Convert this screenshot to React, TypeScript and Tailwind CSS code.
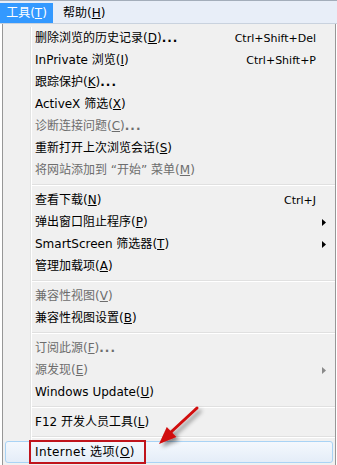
import React from "react";

type Item =
  | { t: "sep" }
  | {
      t: "item";
      label: string;
      k: string;
      suffix?: string;
      shortcut?: string;
      arrow?: boolean;
      disabled?: boolean;
    };

const items: Item[] = [
  { t: "item", label: "删除浏览的历史记录", k: "D", suffix: "...", shortcut: "Ctrl+Shift+Del" },
  { t: "item", label: "InPrivate 浏览", k: "I", shortcut: "Ctrl+Shift+P" },
  { t: "item", label: "跟踪保护", k: "K", suffix: "..." },
  { t: "item", label: "ActiveX 筛选", k: "X" },
  { t: "item", label: "诊断连接问题", k: "C", suffix: "...", disabled: true },
  { t: "item", label: "重新打开上次浏览会话", k: "S" },
  { t: "item", label: "将网站添加到 “开始” 菜单", k: "M", disabled: true },
  { t: "sep" },
  { t: "item", label: "查看下载", k: "N", shortcut: "Ctrl+J" },
  { t: "item", label: "弹出窗口阻止程序", k: "P", arrow: true },
  { t: "item", label: "SmartScreen 筛选器", k: "T", arrow: true },
  { t: "item", label: "管理加载项", k: "A" },
  { t: "sep" },
  { t: "item", label: "兼容性视图", k: "V", disabled: true },
  { t: "item", label: "兼容性视图设置", k: "B" },
  { t: "sep" },
  { t: "item", label: "订阅此源", k: "F", suffix: "...", disabled: true },
  { t: "item", label: "源发现", k: "E", arrow: true, disabled: true },
  { t: "item", label: "Windows Update", k: "U" },
  { t: "sep" },
  { t: "item", label: "F12 开发人员工具", k: "L" },
  { t: "sep" },
];

const Gutter = () => (
  <>
    <div className="w-[28px] shrink-0 border-r border-[#e2e3e3]" />
    <div className="w-px shrink-0 bg-white" />
  </>
);

const Label = ({ label, k, suffix }: { label: string; k: string; suffix?: string }) => (
  <span className="whitespace-nowrap text-[12px]">
    {label}(<span className="underline underline-offset-1">{k}</span>)
    {suffix ? <span className="tracking-[1px] font-bold">{suffix}</span> : null}
  </span>
);

export default function App() {
  return (
    <div
      className="relative h-[465px] w-[337px] overflow-hidden bg-white text-[11px] leading-none text-black"
      style={{ fontFamily: '"DejaVu Sans", "Noto Sans CJK SC", sans-serif' }}
    >
      {/* menu bar */}
      <div className="flex h-[24px] items-end border-t border-b border-t-[#a3adba] border-b-[#c9d2de] bg-[#e8eef8]">
        <div className="flex h-[20px] w-[53px] items-center justify-center bg-[#3399ff] text-white">
          <Label label="工具" k="T" />
        </div>
        <div className="flex h-[20px] items-center pl-[10px]">
          <Label label="帮助" k="H" />
        </div>
      </div>

      {/* dropdown */}
      <div className="ml-[2px] w-[334px] border-l border-r border-[#979797] bg-[#f0f0f0] pt-[3px]">
        {items.map((it, i) =>
          it.t === "sep" ? (
            <div key={i} className="flex h-[8px]">
              <Gutter />
              <div className="flex flex-1 flex-col justify-center">
                <div className="h-px bg-[#e0e0e0]" />
                <div className="h-px bg-white" />
              </div>
            </div>
          ) : (
            <div key={i} className="flex h-[22px]">
              <Gutter />
              <div
                className={`flex flex-1 items-center pl-[3px] ${
                  it.disabled ? "text-[#6d6d6d]" : "text-black"
                }`}
              >
                <Label label={it.label} k={it.k} suffix={it.suffix} />
                <span className="ml-auto whitespace-nowrap">{it.shortcut ?? ""}</span>
                <div className="flex w-[19px] items-center pl-[6px]">
                  {it.arrow && (
                    <svg width="4" height="7" viewBox="0 0 4 7">
                      <path d="M0 0 L4 3.5 L0 7 Z" fill={it.disabled ? "#8a8a8a" : "#000"} />
                    </svg>
                  )}
                </div>
              </div>
            </div>
          )
        )}
        {/* highlighted item */}
        <div className="mx-[2px] flex h-[22px] items-center rounded-[3px] border border-[#a9d3f5] bg-gradient-to-b from-[#f4f8fd] to-[#e4edf8] pl-[29px]">
          <span className="whitespace-nowrap text-[12px] tracking-[0.4px]">
            Internet 选项(<span className="underline underline-offset-1">O</span>)
          </span>
        </div>
        <div className="h-[4px]" />
      </div>

      {/* red highlight box */}
      <div className="absolute left-[29px] top-[440px] h-[24px] w-[117px] border-2 border-[#c0141c]" />

      {/* red arrow */}
      <svg className="absolute left-[150px] top-[400px]" width="70" height="60" viewBox="150 400 70 60">
        <defs>
          <filter id="sh" x="-50%" y="-50%" width="200%" height="200%">
            <feDropShadow dx="3" dy="3" stdDeviation="2" floodColor="#000" floodOpacity="0.45" />
          </filter>
        </defs>
        <g filter="url(#sh)">
          <line x1="197" y1="408" x2="170" y2="433" stroke="#d10a0a" strokeWidth="3" strokeLinecap="round" />
          <path d="M159 444 L166.8 426.9 L176.4 437.1 Z" fill="#d10a0a" />
        </g>
      </svg>
    </div>
  );
}
